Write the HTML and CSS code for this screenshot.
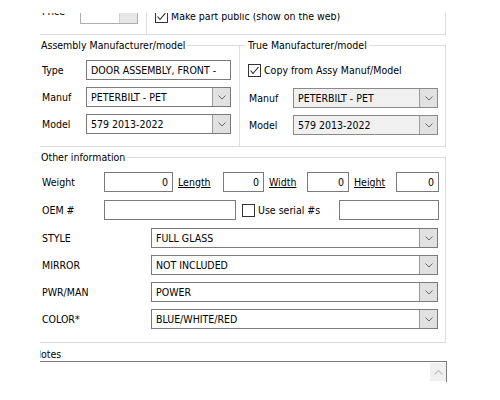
FILE: index.html
```html
<!DOCTYPE html>
<html lang="en">
<head>
    <meta charset="UTF-8">
    <title>Part Details</title>
    <link rel="stylesheet" href="styles.css">
</head>
<body>
    <div class="viewport">
        <div class="page">
            <div class="top-box">
                <div class="top-left">
                    <span class="label top-label">Price</span>
                    <div class="spin"><span class="spin-field"></span><span class="spin-btn"></span></div>
                </div>
                <div class="top-right">
                    <label class="check">
                        <span class="box"><svg width="11" height="11" viewBox="0 0 11 11"><polyline points="1.5,5.5 4,8.5 9.5,2" fill="none" stroke="#222" stroke-width="1.1"/></svg></span>
                        Make part public (show on the web)
                    </label>
                </div>
            </div>

            <div class="groups">
                <div class="group group-assy">
                    <div class="group-title">Assembly Manufacturer/model</div>
                    <div class="row first">
                        <span class="label">Type</span>
                        <div class="field">DOOR ASSEMBLY, FRONT -</div>
                    </div>
                    <div class="row">
                        <span class="label">Manuf</span>
                        <div class="field select">
                            <span class="value">PETERBILT - PET</span>
                            <span class="drop"><svg width="8" height="5" viewBox="0 0 8 5"><polyline points="0.5,0.5 4,4 7.5,0.5" fill="none" stroke="#666" stroke-width="1"/></svg></span>
                        </div>
                    </div>
                    <div class="row">
                        <span class="label">Model</span>
                        <div class="field select">
                            <span class="value">579 2013-2022</span>
                            <span class="drop"><svg width="8" height="5" viewBox="0 0 8 5"><polyline points="0.5,0.5 4,4 7.5,0.5" fill="none" stroke="#666" stroke-width="1"/></svg></span>
                        </div>
                    </div>
                </div>

                <div class="group group-true">
                    <div class="group-title">True Manufacturer/model</div>
                    <label class="check copy-check">
                        <span class="box"><svg width="11" height="11" viewBox="0 0 11 11"><polyline points="1.5,5.5 4,8.5 9.5,2" fill="none" stroke="#222" stroke-width="1.1"/></svg></span>
                        Copy from Assy Manuf/Model
                    </label>
                    <div class="row copy-row">
                        <span class="label">Manuf</span>
                        <div class="field select disabled">
                            <span class="value">PETERBILT - PET</span>
                            <span class="drop"><svg width="8" height="5" viewBox="0 0 8 5"><polyline points="0.5,0.5 4,4 7.5,0.5" fill="none" stroke="#666" stroke-width="1"/></svg></span>
                        </div>
                    </div>
                    <div class="row">
                        <span class="label">Model</span>
                        <div class="field select disabled">
                            <span class="value">579 2013-2022</span>
                            <span class="drop"><svg width="8" height="5" viewBox="0 0 8 5"><polyline points="0.5,0.5 4,4 7.5,0.5" fill="none" stroke="#666" stroke-width="1"/></svg></span>
                        </div>
                    </div>
                </div>
            </div>

            <div class="group group-other">
                <div class="group-title">Other information</div>
                <div class="row first">
                    <span class="label label-wide">Weight</span>
                    <div class="field num w-weight">0</div>
                    <a class="dim-link link-length">Length</a>
                    <div class="field num w-length">0</div>
                    <a class="dim-link link-width">Width</a>
                    <div class="field num w-width">0</div>
                    <a class="dim-link link-height">Height</a>
                    <div class="field num w-height">0</div>
                </div>
                <div class="row oem-row">
                    <span class="label label-wide">OEM #</span>
                    <div class="field w-oem"></div>
                    <label class="check serial-check">
                        <span class="box"></span>
                        Use serial #s
                    </label>
                    <div class="field w-serial"></div>
                </div>
                <div class="select-list">
                    <div class="row">
                        <span class="label label-long">STYLE</span>
                        <div class="field select w-attr">
                            <span class="value">FULL GLASS</span>
                            <span class="drop"><svg width="8" height="5" viewBox="0 0 8 5"><polyline points="0.5,0.5 4,4 7.5,0.5" fill="none" stroke="#666" stroke-width="1"/></svg></span>
                        </div>
                    </div>
                    <div class="row">
                        <span class="label label-long">MIRROR</span>
                        <div class="field select w-attr">
                            <span class="value">NOT INCLUDED</span>
                            <span class="drop"><svg width="8" height="5" viewBox="0 0 8 5"><polyline points="0.5,0.5 4,4 7.5,0.5" fill="none" stroke="#666" stroke-width="1"/></svg></span>
                        </div>
                    </div>
                    <div class="row">
                        <span class="label label-long">PWR/MAN</span>
                        <div class="field select w-attr">
                            <span class="value">POWER</span>
                            <span class="drop"><svg width="8" height="5" viewBox="0 0 8 5"><polyline points="0.5,0.5 4,4 7.5,0.5" fill="none" stroke="#666" stroke-width="1"/></svg></span>
                        </div>
                    </div>
                    <div class="row">
                        <span class="label label-long">COLOR*</span>
                        <div class="field select w-attr">
                            <span class="value">BLUE/WHITE/RED</span>
                            <span class="drop"><svg width="8" height="5" viewBox="0 0 8 5"><polyline points="0.5,0.5 4,4 7.5,0.5" fill="none" stroke="#666" stroke-width="1"/></svg></span>
                        </div>
                    </div>
                </div>
            </div>

            <div class="notes">
                <span class="notes-label">Notes</span>
                <div class="notes-box">
                    <span class="scroll-up"><svg width="9" height="5" viewBox="0 0 9 5"><polyline points="0.5,4.5 4.5,0.5 8.5,4.5" fill="none" stroke="#c4c4c4" stroke-width="1.2"/></svg></span>
                </div>
            </div>
        </div>
    </div>
</body>
</html>
```

FILE: styles.css
```css
body, html {
    margin: 0;
    padding: 0;
    background: #fff;
    color: #000;
    font-family: "DejaVu Sans Condensed", "DejaVu Sans", sans-serif;
    font-stretch: condensed;
    font-size: 10.5px;
    line-height: 13px;
}

/* visible part of the scrolled form */
.viewport {
    margin: 13px 0 0 40px;
    width: 407px;
    height: 369px;
    overflow: hidden;
}

.page {
    margin: -13px 0 0 -8px;
    width: 415px;
}

.label {
    width: 45px;
    flex-shrink: 0;
    padding-left: 1px;
    box-sizing: border-box;
}

.label-wide {
    width: 63px;
}

.label-long {
    width: 110px;
}

/* top strip */
.top-box {
    display: flex;
    width: 414px;
    height: 35px;
    box-sizing: border-box;
    border-right: 1px solid #dcdcdc;
    border-bottom: 1px solid #dcdcdc;
}

.top-left {
    display: flex;
    width: 115px;
    height: 34px;
    box-sizing: border-box;
    padding: 4px 0 0 9px;
    border-right: 1px solid #dcdcdc;
}

.top-label {
    width: 39px;
    padding-top: 1px;
}

.spin {
    display: flex;
    width: 58px;
    height: 20px;
    box-sizing: border-box;
    border: 1px solid #adadad;
}

.spin-field {
    flex: 1;
}

.spin-btn {
    width: 17px;
    background: #e6e6e6;
    border-left: 1px solid #cfcfcf;
}

.top-right {
    padding: 10px 0 0 8px;
}

/* checkboxes */
.check {
    display: flex;
    align-items: center;
    white-space: nowrap;
}

.box {
    display: flex;
    align-items: center;
    justify-content: center;
    width: 13px;
    height: 13px;
    box-sizing: border-box;
    border: 1px solid #333;
    background: #fff;
    margin-right: 3px;
}

/* group boxes */
.groups {
    display: flex;
    margin-top: 10px;
    height: 102px;
}

.group {
    box-sizing: border-box;
    border: 1px solid #dcdcdc;
    padding: 0 0 0 8px;
}

.group-assy {
    width: 208px;
}

.group-true {
    width: 206px;
    border-left: none;
}

.group-other {
    width: 414px;
    height: 186px;
    margin-top: 10px;
}

.group-title {
    width: fit-content;
    height: 13px;
    margin: -7px 0 0 -3px;
    padding: 0 2px 0 3px;
    background: #fff;
}

.row {
    display: flex;
    align-items: center;
    height: 20px;
    margin-top: 7px;
}

.row.first {
    margin-top: 8px;
}

.row.oem-row {
    margin-top: 8px;
}

.copy-check {
    margin-top: 12px;
}

.copy-row {
    margin-top: 11px;
}

/* inputs */
.field {
    display: flex;
    align-items: center;
    width: 145px;
    height: 20px;
    box-sizing: border-box;
    border: 1px solid #7a7a7a;
    padding-left: 4px;
    background: #fff;
    white-space: nowrap;
    overflow: hidden;
}

.field.num {
    justify-content: flex-end;
    padding: 0 4px 0 0;
}

.select {
    padding-left: 0;
}

.select .value {
    flex: 1;
    padding-left: 4px;
}

.select .drop {
    display: flex;
    align-items: center;
    justify-content: center;
    width: 17px;
    height: 18px;
    background: #e1e1e1;
    border-left: 1px solid #9a9a9a;
}

.select.disabled {
    background: #f0f0f0;
    border-color: #8a8a8a;
}

.w-weight { width: 69px; }
.w-length { width: 41px; }
.w-width { width: 42px; }
.w-height { width: 43px; }
.w-oem { width: 132px; }
.w-serial { width: 100px; }
.w-attr { width: 287px; }

.dim-link {
    text-decoration: underline;
    color: #000;
    margin-left: 5px;
}

.link-length { width: 45px; }
.link-width { width: 38px; }
.link-height { width: 42px; }

.serial-check {
    margin-left: 6px;
    width: 97px;
}

.select-list {
    display: flex;
    flex-direction: column;
    gap: 7px;
    margin-top: 8px;
}

.select-list .row {
    margin-top: 0;
}

/* notes */
.notes {
    margin-top: 5px;
}

.notes-label {
    display: block;
    padding-left: 2px;
}

.notes-box {
    position: relative;
    width: 415px;
    height: 60px;
    box-sizing: border-box;
    border: 1px solid #7a7a7a;
}

.scroll-up {
    position: absolute;
    top: 1px;
    right: 0;
    display: flex;
    align-items: center;
    justify-content: center;
    width: 16px;
    height: 18px;
    background: #f0f0f0;
}
```
